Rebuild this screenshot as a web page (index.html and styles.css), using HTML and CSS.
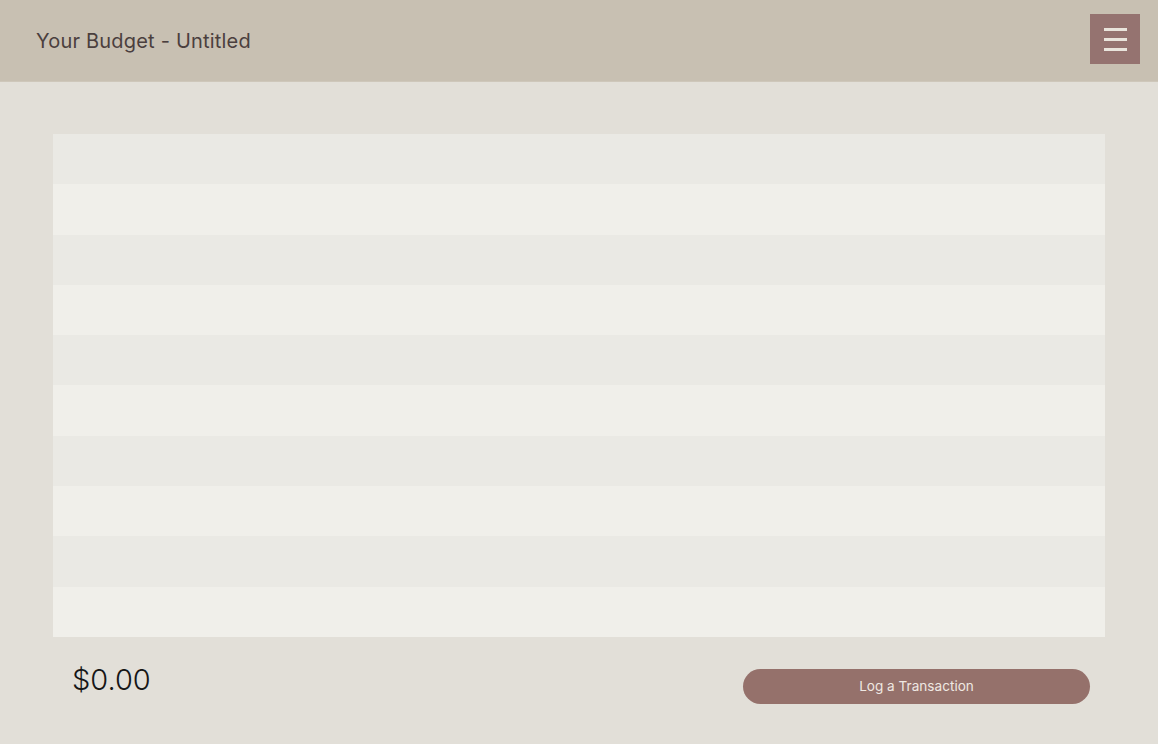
FILE: index.html
```html
<!DOCTYPE html>
<html>
<head>
<meta charset="utf-8">
<link rel="stylesheet" href="styles.css">
</head>
<body>
<header class="topbar">
  <h1 class="title">Your Budget - Untitled</h1>
  <button class="menu-btn" aria-label="Menu">
    <span class="bar"></span><span class="bar"></span><span class="bar"></span>
  </button>
</header>
<main class="content">
  <div class="ledger">
    <div class="row"></div>
    <div class="row"></div>
    <div class="row"></div>
    <div class="row"></div>
    <div class="row"></div>
    <div class="row"></div>
    <div class="row"></div>
    <div class="row"></div>
    <div class="row"></div>
    <div class="row"></div>
  </div>
  <div class="footer">
    <div class="total">$0.00</div>
    <button class="log-btn">Log a Transaction</button>
  </div>
</main>
</body>
</html>
```
FILE: styles.css
```css
* { box-sizing: border-box; }
html, body { margin: 0; padding: 0; }
body {
  background: #e2dfd8;
  font-family: Inter, "Noto Sans", sans-serif;
  width: 1158px;
  height: 744px;
  overflow: hidden;
}
.topbar {
  height: 82px;
  background: #c8c0b2;
  display: flex;
  align-items: center;
  justify-content: space-between;
  padding: 0 18px 0 36px;
  border-bottom: 1px solid #cec7ba;
}
.title {
  margin: 0;
  font-size: 20px;
  font-weight: 400;
  color: #4b3f3e;
  letter-spacing: 0.2px;
}
.menu-btn {
  width: 50px;
  height: 50px;
  background: #957370;
  border: none;
  padding: 0;
  display: flex;
  flex-direction: column;
  align-items: center;
  justify-content: center;
  gap: 7px;
  margin-top: -3px;
}
.menu-btn .bar {
  display: block;
  width: 23px;
  height: 3px;
  background: #e9e4dc;
}
.content {
  padding: 52px 53px 0 53px;
}
.ledger {
  display: flex;
  flex-direction: column;
}
.row {
  height: 50.3px;
  background: #eae9e4;
}
.row:nth-child(even) {
  background: #f0efea;
}
.footer {
  display: flex;
  align-items: center;
  justify-content: space-between;
  padding: 24px 15px 0 19px;
}
.total {
  font-size: 29px;
  font-weight: 300;
  color: #161616;
  margin-top: -5px;
}
.log-btn {
  width: 347px;
  height: 35px;
  border: none;
  border-radius: 18px;
  background: #95716b;
  color: #efe8e2;
  font-family: Inter, "Noto Sans", sans-serif;
  font-size: 13.6px;
  margin-top: 8px;
}
```
